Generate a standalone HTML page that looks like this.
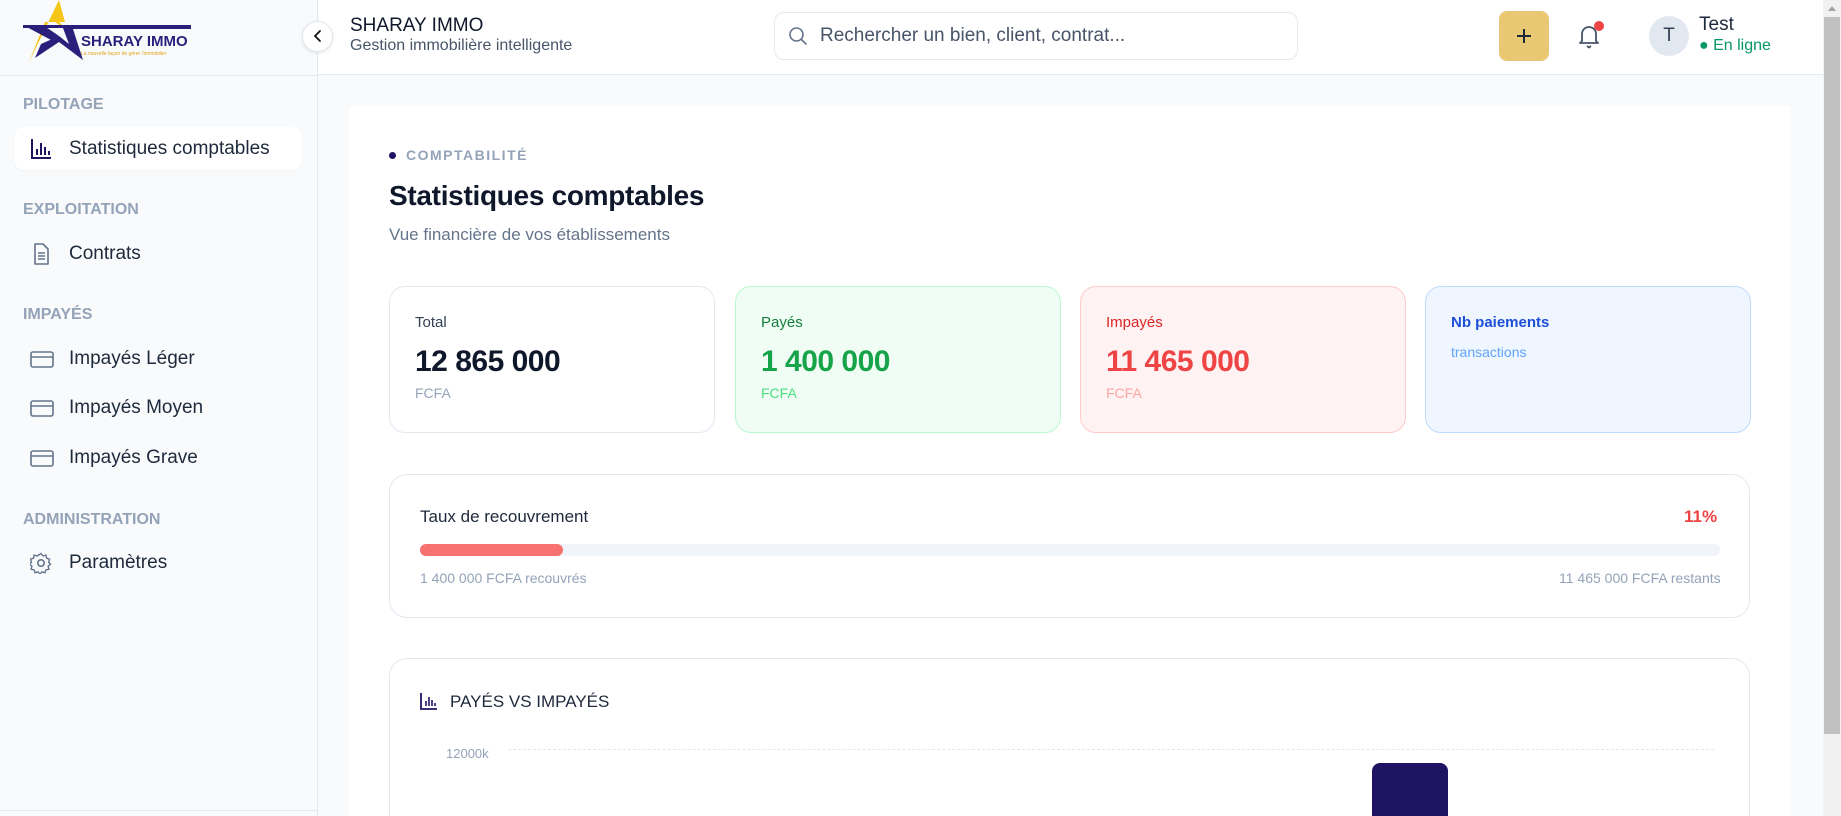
<!DOCTYPE html>
<html><head><meta charset="utf-8"><style>
*{box-sizing:border-box;margin:0;padding:0}
html,body{width:1841px;height:816px;overflow:hidden}
body{font-family:"Liberation Sans",Arial,sans-serif;background:#f8fafc;color:#0f172a}
#w{position:relative;width:1841px;height:816px;overflow:hidden;background:#f8fafc}
.abs{position:absolute}
.side{left:0;top:0;width:318px;height:816px;background:#f8fafc;border-right:1px solid #e2e8f0}
.hdr{left:318px;top:0;width:1505px;height:75px;background:#fff;border-bottom:1px solid #e2e8f0}
.sbhdr{left:0;top:75px;width:318px;border-top:1px solid #e2e8f0}
.sec{position:absolute;left:23px;font-size:16px;font-weight:bold;color:#94a3b8}
.item{position:absolute;left:14px;width:288px;height:43px;font-size:19px;color:#1e293b;display:flex;align-items:center;padding-left:55px}
.item svg{position:absolute;left:16px;top:11px}
.active{background:#fff;border-radius:10px;box-shadow:0 1px 2px rgba(0,0,0,.04)}
.card{position:absolute;top:286px;width:326px;height:147px;border-radius:16px;border:1px solid #e2e8f0;background:#fff;padding:27px 0 0 25px}
.card .l{font-size:15px;font-weight:bold}
.card .v{font-size:30px;font-weight:bold;margin-top:14px;letter-spacing:-0.5px}
.card .u{font-size:14px;margin-top:6px}
</style></head><body><div id="w">
<div class="abs side"></div>
<div class="abs hdr"></div>
<div class="abs sbhdr"></div>
<div class="abs" style="left:0;top:810px;width:318px;border-top:1px solid #e2e8f0"></div>
<svg class="abs" style="left:21px;top:0" width="175" height="64" viewBox="0 0 175 64">
<polygon points="38,0 44,22 24,22 8,62" fill="#f5c518"/>
<polygon points="38,0 34,22 46,30 38,22" fill="#f5c518"/>
<polygon points="2,25 170,25 170,29 52,29 62,60 38,42 14,58 20,44 38,36 48,44 42,28 2,28" fill="#2a1f7a"/>
<polygon points="2,25 22,25 38,36 30,40" fill="#2a1f7a"/>
<text x="60" y="46" font-family="Liberation Sans" font-weight="bold" font-size="15" fill="#2a1f7a">SHARAY IMMO</text>
<text x="60" y="55" font-family="Liberation Sans" font-size="5" fill="#e3a51a">La nouvelle façon de gérer l'immobilier</text>
</svg>
<div class="abs" style="left:302px;top:21px;width:31px;height:31px;border-radius:50%;background:#fff;border:1px solid #e2e8f0;box-shadow:0 1px 3px rgba(0,0,0,.1)"></div>
<svg class="abs" style="left:311px;top:29px" width="14" height="14" viewBox="0 0 14 14"><path d="M9 2L4 7l5 5" fill="none" stroke="#111" stroke-width="1.8" stroke-linecap="round"/></svg>
<div class="abs" style="left:350px;top:15px;font-size:19px;color:#0f172a">SHARAY IMMO</div>
<div class="abs" style="left:350px;top:37px;font-size:16px;color:#475569">Gestion immobilière intelligente</div>
<div class="abs" style="left:774px;top:12px;width:524px;height:48px;border:1px solid #e2e8f0;border-radius:10px;background:#fff"></div>
<svg class="abs" style="left:788px;top:26px" width="20" height="20" viewBox="0 0 20 20"><circle cx="8.5" cy="8.5" r="6.5" fill="none" stroke="#64748b" stroke-width="1.6"/><path d="M13.5 13.5L18 18" stroke="#64748b" stroke-width="1.6" stroke-linecap="round"/></svg>
<div class="abs" style="left:820px;top:25px;font-size:19px;color:#475569">Rechercher un bien, client, contrat...</div>
<div class="abs" style="left:1499px;top:11px;width:50px;height:50px;border-radius:8px;background:#e9c874"></div>
<svg class="abs" style="left:1515px;top:27px" width="18" height="18" viewBox="0 0 18 18"><path d="M9 2v14M2 9h14" stroke="#1f2937" stroke-width="2"/></svg>
<svg class="abs" style="left:1577px;top:23px" width="24" height="26" viewBox="0 0 24 26"><path d="M5 18V11a7 7 0 0 1 14 0v7l2 2H3z" fill="none" stroke="#475569" stroke-width="1.8" stroke-linejoin="round"/><path d="M10 23l2 1.5 2-1.5" fill="none" stroke="#475569" stroke-width="1.8"/></svg>
<div class="abs" style="left:1594px;top:21px;width:10px;height:10px;border-radius:50%;background:#ef4444"></div>
<div class="abs" style="left:1649px;top:16px;width:40px;height:40px;border-radius:50%;background:#e2e8f0;text-align:center;line-height:40px;font-size:19px;color:#334155">T</div>
<div class="abs" style="left:1699px;top:14px;font-size:19px;color:#1e293b">Test</div>
<div class="abs" style="left:1699px;top:37px;font-size:16px;color:#059669">● En ligne</div>
<div class="abs" style="left:349px;top:106px;width:1441px;height:710px;background:#fff"></div>
<div class="abs" style="left:389px;top:152px;width:7px;height:7px;border-radius:50%;background:#1e1463"></div>
<div class="abs" style="left:406px;top:147px;font-size:14px;font-weight:bold;letter-spacing:1.5px;color:#94a3b8">COMPTABILITÉ</div>
<div class="abs" style="left:389px;top:180px;font-size:28px;font-weight:bold;color:#0f172a;letter-spacing:-0.3px">Statistiques comptables</div>
<div class="abs" style="left:389px;top:225px;font-size:17px;color:#64748b">Vue financière de vos établissements</div>
<div class="card" style="left:389px"><div class="l" style="color:#334155;font-weight:normal">Total</div><div class="v" style="color:#0f172a">12 865 000</div><div class="u" style="color:#94a3b8">FCFA</div></div>
<div class="card" style="left:735px;background:#f0fdf4;border-color:#bbf7d0"><div class="l" style="color:#15803d;font-weight:normal">Payés</div><div class="v" style="color:#16a34a">1 400 000</div><div class="u" style="color:#4ade80">FCFA</div></div>
<div class="card" style="left:1080px;background:#fef2f2;border-color:#fecaca"><div class="l" style="color:#dc2626;font-weight:normal">Impayés</div><div class="v" style="color:#ef4444">11 465 000</div><div class="u" style="color:#fca5a5">FCFA</div></div>
<div class="card" style="left:1425px;background:#eff6ff;border-color:#bfdbfe"><div class="l" style="color:#1d4ed8">Nb paiements</div><div style="font-size:14px;color:#60a5fa;margin-top:13px">transactions</div></div>
<div class="abs" style="left:389px;top:474px;width:1361px;height:144px;border:1px solid #e2e8f0;border-radius:18px"></div>
<div class="abs" style="left:420px;top:507px;font-size:17px;color:#1e293b">Taux de recouvrement</div>
<div class="abs" style="left:1684px;top:507px;font-size:17px;font-weight:bold;color:#ef4444">11%</div>
<div class="abs" style="left:420px;top:544px;width:1300px;height:12px;border-radius:6px;background:#f1f5f9"></div>
<div class="abs" style="left:420px;top:544px;width:143px;height:12px;border-radius:6px;background:#f87171"></div>
<div class="abs" style="left:420px;top:570px;font-size:14px;color:#94a3b8">1 400 000 FCFA recouvrés</div>
<div class="abs" style="left:1559px;top:570px;font-size:14px;color:#94a3b8">11 465 000 FCFA restants</div>
<div class="abs" style="left:389px;top:658px;width:1361px;height:158px;border:1px solid #e2e8f0;border-bottom:none;border-radius:18px 18px 0 0"></div>
<svg class="abs" style="left:420px;top:692px" width="18" height="18" viewBox="0 0 18 18"><path d="M1 1v16h16" fill="none" stroke="#1e1463" stroke-width="1.8"/><path d="M6 9v5M9 5v9M12 8v6M15 11v3" stroke="#1e1463" stroke-width="1.6"/></svg>
<div class="abs" style="left:450px;top:692px;font-size:17px;color:#1e293b">PAYÉS VS IMPAYÉS</div>
<div class="abs" style="left:446px;top:746px;font-size:13px;color:#94a3b8">12000k</div>
<div class="abs" style="left:508px;top:749px;width:1206px;border-top:1px dashed #e5e7eb"></div>
<div class="abs" style="left:1372px;top:763px;width:76px;height:53px;border-radius:8px 8px 0 0;background:#1e1463"></div>
<div class="sec" style="top:96px">PILOTAGE</div>
<div class="item active" style="top:127px"><svg width="22" height="22" viewBox="0 0 22 22"><path d="M2 1v19h19" fill="none" stroke="#1e1463" stroke-width="2"/><path d="M7 11v6M11 5v12M15 9v8M19 13v4" stroke="#1e1463" stroke-width="2"/></svg>Statistiques comptables</div>
<div class="sec" style="top:201px">EXPLOITATION</div>
<div class="item" style="top:232px"><svg width="22" height="22" viewBox="0 0 22 22"><path d="M5 1h8l5 5v15H5z" fill="none" stroke="#64748b" stroke-width="1.6" stroke-linejoin="round"/><path d="M8 10h7M8 13h7M8 16h7" stroke="#64748b" stroke-width="1.4"/></svg>Contrats</div>
<div class="sec" style="top:306px">IMPAYÉS</div>
<div class="item" style="top:337px"><svg width="24" height="22" viewBox="0 0 24 22"><rect x="1" y="4" width="22" height="15" rx="2" fill="none" stroke="#64748b" stroke-width="1.6"/><path d="M1 9h22" stroke="#64748b" stroke-width="1.6"/></svg>Impayés Léger</div>
<div class="item" style="top:386px"><svg width="24" height="22" viewBox="0 0 24 22"><rect x="1" y="4" width="22" height="15" rx="2" fill="none" stroke="#64748b" stroke-width="1.6"/><path d="M1 9h22" stroke="#64748b" stroke-width="1.6"/></svg>Impayés Moyen</div>
<div class="item" style="top:436px"><svg width="24" height="22" viewBox="0 0 24 22"><rect x="1" y="4" width="22" height="15" rx="2" fill="none" stroke="#64748b" stroke-width="1.6"/><path d="M1 9h22" stroke="#64748b" stroke-width="1.6"/></svg>Impayés Grave</div>
<div class="sec" style="top:511px">ADMINISTRATION</div>
<div class="item" style="top:541px"><svg width="22" height="22" viewBox="0 0 22 22"><circle cx="11" cy="11" r="3.2" fill="none" stroke="#64748b" stroke-width="1.6"/><path d="M11 1.5l2 2.5 3-1 .6 3.2 3 1-1 3 2 2-2.5 2 1 3-3.1.6-1 3-3-1-2 2.4-2-2.4-3 1-1-3-3-.6 1-3-2.5-2 2-2-1-3 3-1 .6-3.2 3 1z" fill="none" stroke="#64748b" stroke-width="1.4" stroke-linejoin="round"/></svg>Paramètres</div>
<div class="abs" style="left:1823px;top:0;width:18px;height:816px;background:#f1f1f1"></div>
<div class="abs" style="left:1824px;top:17px;width:16px;height:717px;background:#c1c1c1"></div>
<svg class="abs" style="left:1826px;top:4px" width="12" height="8"><path d="M2 7L6 2l4 5z" fill="#a3a3a3"/></svg>
</div></body></html>
